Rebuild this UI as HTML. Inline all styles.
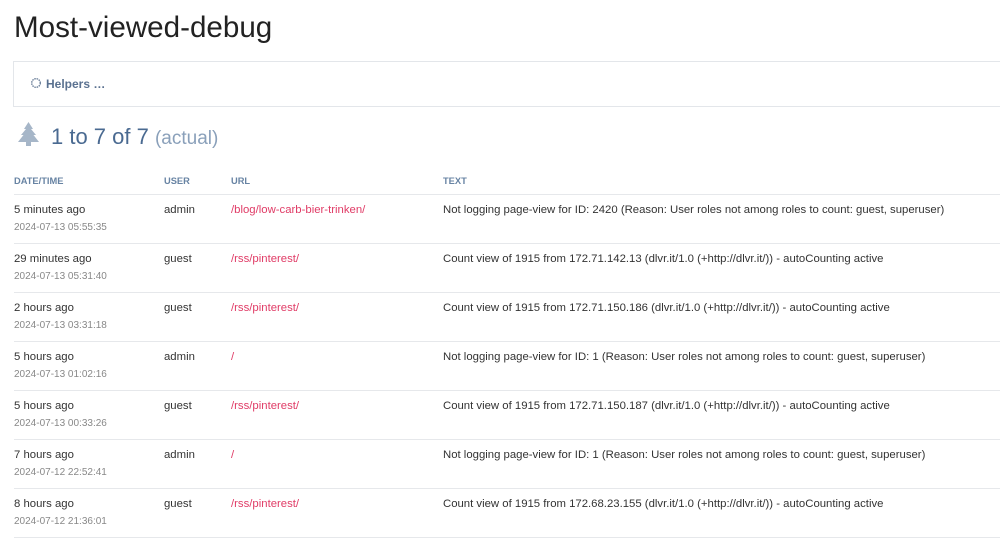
<!DOCTYPE html>
<html><head><style>
body{margin:0;background:#fff;font-family:"Liberation Sans",sans-serif;color:#333;width:1000px;height:558px;overflow:hidden;position:relative}
h1{position:absolute;left:14px;top:11px;margin:0;font-size:29.6px;font-weight:normal;color:#222}
.box{position:absolute;left:13px;top:61px;width:1000px;height:46px;border:1px solid #e3e6ea;box-sizing:border-box}
.help{position:absolute;left:31px;top:77px;font-size:12px;font-weight:bold;color:#5a7190}
.h2{position:absolute;left:51px;top:124px;font-size:22px;color:#4a6a91}
.h2 span{color:#8aa0ba;font-size:19px}
.th{position:absolute;top:176px;font-size:9.3px;font-weight:bold;color:#6783a3}
.line{position:absolute;left:14px;width:986px;height:1px;background:#e6e8eb}
.c{position:absolute;font-size:11.35px;color:#333}
.d{position:absolute;font-size:10px;color:#888}
.u{color:#e03b66}
</style></head><body>
<h1>Most-viewed-debug</h1>
<div class="box"></div>
<svg style="position:absolute;left:30px;top:77px" width="12" height="12" viewBox="0 0 12 12"><circle cx="6" cy="6" r="4.3" fill="none" stroke="#6b7f99" stroke-width="1.4" stroke-dasharray="1.5 0.8"/></svg>
<div class="help" style="left:46px">Helpers …</div>
<svg style="position:absolute;left:18px;top:122px" width="21" height="24" viewBox="0 0 21 24"><path d="M10.5 0 L15 7 H13 L18 13 H15.5 L21 20 H13 V24 H8 V20 H0 L5.5 13 H3 L8 7 H6 Z" fill="#a6b6c8"/></svg>
<div class="h2">1 to 7 of 7 <span>(actual)</span></div>
<div class="th" style="left:14px">DATE/TIME</div>
<div class="th" style="left:164px">USER</div>
<div class="th" style="left:231px">URL</div>
<div class="th" style="left:443px">TEXT</div>
<div class="line" style="top:194px"></div>
<div id="rows"></div>
<script>
var r=[["5 minutes ago","2024-07-13 05:55:35","admin","/blog/low-carb-bier-trinken/","Not logging page-view for ID: 2420 (Reason: User roles not among roles to count: guest, superuser)"],
["29 minutes ago","2024-07-13 05:31:40","guest","/rss/pinterest/","Count view of 1915 from 172.71.142.13 (dlvr.it/1.0 (+http://dlvr.it/)) - autoCounting active"],
["2 hours ago","2024-07-13 03:31:18","guest","/rss/pinterest/","Count view of 1915 from 172.71.150.186 (dlvr.it/1.0 (+http://dlvr.it/)) - autoCounting active"],
["5 hours ago","2024-07-13 01:02:16","admin","/","Not logging page-view for ID: 1 (Reason: User roles not among roles to count: guest, superuser)"],
["5 hours ago","2024-07-13 00:33:26","guest","/rss/pinterest/","Count view of 1915 from 172.71.150.187 (dlvr.it/1.0 (+http://dlvr.it/)) - autoCounting active"],
["7 hours ago","2024-07-12 22:52:41","admin","/","Not logging page-view for ID: 1 (Reason: User roles not among roles to count: guest, superuser)"],
["8 hours ago","2024-07-12 21:36:01","guest","/rss/pinterest/","Count view of 1915 from 172.68.23.155 (dlvr.it/1.0 (+http://dlvr.it/)) - autoCounting active"]];
var h="";r.forEach(function(x,i){var t=194+49*i;
h+='<div class="c" style="left:14px;top:'+(t+10)+'px">'+x[0]+'</div><div class="d" style="left:14px;top:'+(t+28)+'px">'+x[1]+'</div><div class="c" style="left:164px;top:'+(t+10)+'px">'+x[2]+'</div><div class="c u" style="left:231px;top:'+(t+10)+'px">'+x[3]+'</div><div class="c" style="left:443px;top:'+(t+10)+'px">'+x[4]+'</div><div class="line" style="top:'+(t+49)+'px"></div>';});
document.getElementById("rows").innerHTML=h;
</script>
</body></html>
